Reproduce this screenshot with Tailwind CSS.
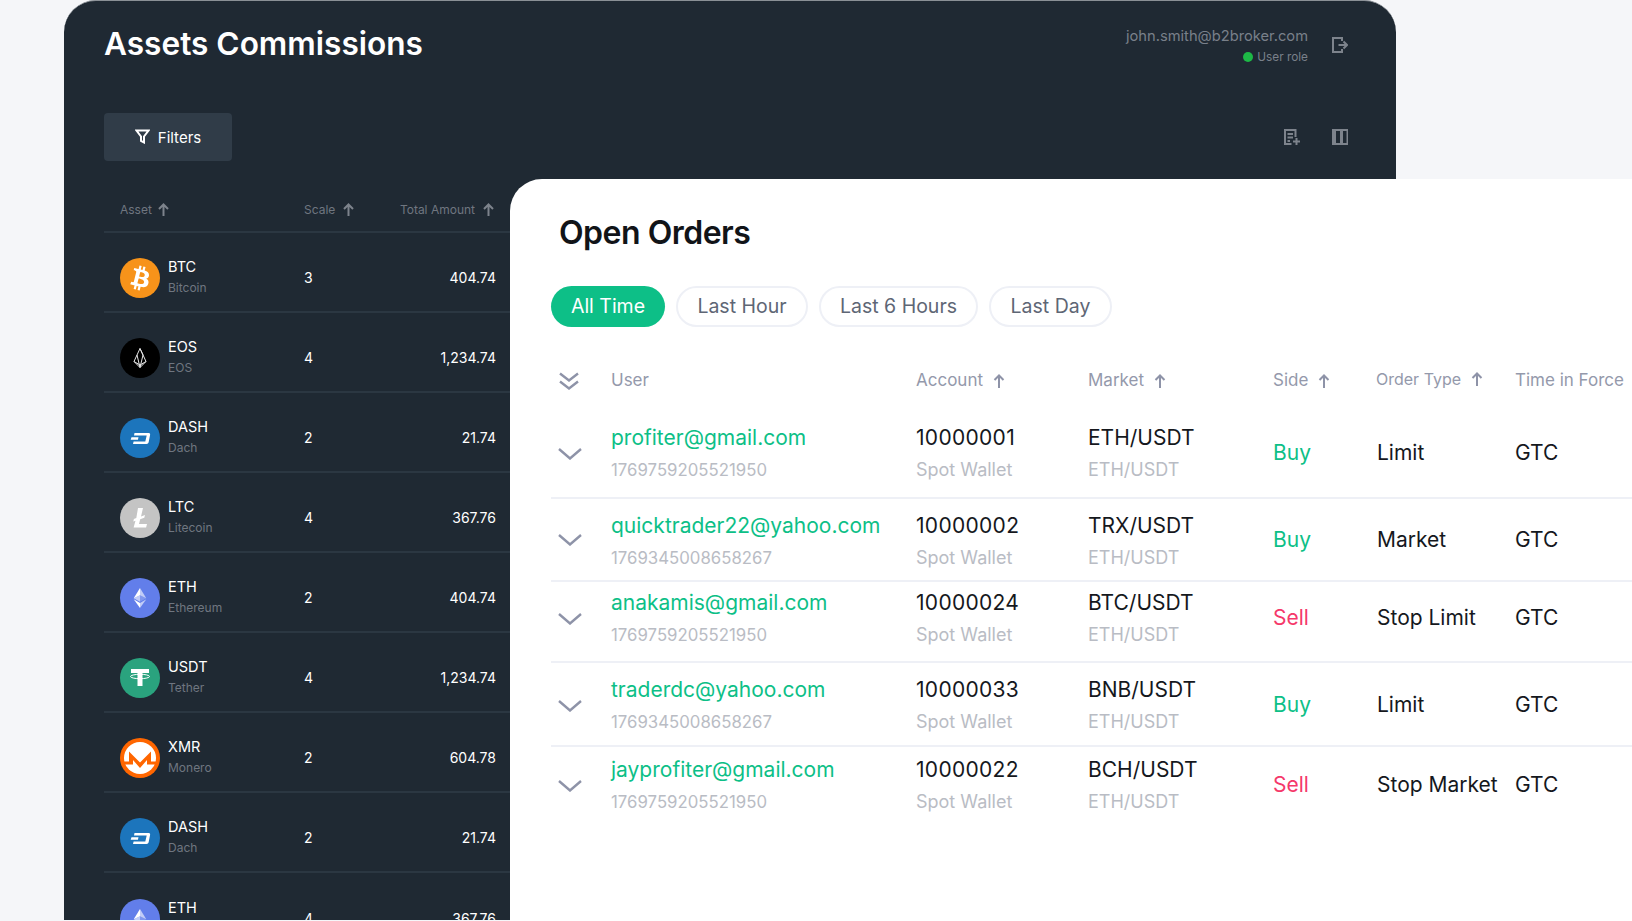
<!DOCTYPE html>
<html><head><meta charset="utf-8"><title>Orders</title>
<script src="https://cdn.jsdelivr.net/npm/@tailwindcss/browser@4"></script></head>
<body class="m-0 font-['Inter','Liberation_Sans',sans-serif]">
<div class="relative w-[1632px] h-[921px] overflow-hidden bg-[#f5f6f9]">
  <!-- dark window -->
  <section class="absolute left-[64px] top-0 w-[1332px] h-[920px] rounded-t-[32px] border-t border-[#8a9096] bg-[#1f2933] pl-[40px] pr-[48px] text-white overflow-hidden">
    <header class="flex items-start justify-between h-[112px]">
      <h1 class="mt-[24px] text-[31.600px] leading-[38px] font-semibold">Assets Commissions</h1>
      <div class="flex items-start pt-[26px]">
        <div class="text-right text-[#79808a]">
          <div class="text-[14.700px] leading-[18px]">john.smith@b2broker.com</div>
          <div class="mt-[4px] flex items-center justify-end gap-[4px] text-[11.800px] leading-[16px]"><span class="size-[10px] rounded-full bg-[#1db846]"></span>User role</div>
        </div>
        <svg class="ml-[24px] mt-[10px]" width="16" height="16" viewBox="0 0 16 16" fill="none" stroke="#7d838c" stroke-width="2"><path d="M10 4V1H1v14h9v-3M6.500 8H15M11.500 4.500 15 8l-3.500 3.500"/></svg>
      </div>
    </header>
    <div class="flex items-center justify-between h-[47px]">
      <button class="flex items-center justify-center gap-[8px] w-[128px] h-[48px] rounded-[4px] bg-[#303c48] text-[15px] text-white">
        <svg width="15" height="15" viewBox="0 0 15 15" fill="none" stroke="#fff" stroke-width="2"><path d="M1.500 1.500h12L9 7.500v6l-3-1.500V7.500z"/></svg><span class="mt-[3px]">Filters</span>
      </button>
      <div class="flex items-center gap-[32px]">
        <svg width="16" height="16" viewBox="0 0 16 16" fill="none" stroke="#7d838c" stroke-width="2"><path d="M11.500 8V1H1v14h6.500M3.500 5h5.500M3.500 8.500h5.500M3.500 12h2.500M12.500 9v7M9 12.500h7"/></svg>
        <svg width="16" height="16" viewBox="0 0 16 16"><path fill="#7d838c" fill-rule="evenodd" d="M0 0h16v16H0zM4 2v12h4V2zM11 2v12h3.500V2z"/></svg>
      </div>
    </div>
    <div class="w-[406px] mt-[24px]">
      <div class="grid grid-cols-[184px_86px_1fr] items-center h-[49px] pt-[4px] pl-[16px] pr-[16px] border-b-2 border-[#2b3742] text-[12px] text-[#6f7680]">
        <div class="flex items-center gap-[6px]">Asset <svg width="11" height="13" viewBox="0 0 11 13" fill="none" stroke="#7d838c" stroke-width="2"><path d="M5.500 13V1.500M1 6l4.500-4.500L10 6"/></svg></div>
        <div class="flex items-center gap-[8px]">Scale <svg width="11" height="13" viewBox="0 0 11 13" fill="none" stroke="#7d838c" stroke-width="2"><path d="M5.500 13V1.500M1 6l4.500-4.500L10 6"/></svg></div>
        <div class="flex items-center justify-end gap-[8px] whitespace-nowrap">Total Amount <svg width="11" height="13" viewBox="0 0 11 13" fill="none" stroke="#7d838c" stroke-width="2"><path d="M5.500 13V1.500M1 6l4.500-4.500L10 6"/></svg></div>
      </div>

      <div class="grid grid-cols-[184px_86px_1fr] items-center h-[80px] pt-[11px] pl-[16px] pr-[14px] border-b-2 border-[#2b3742] text-[14.500px]">
        <div class="flex items-center gap-[8px]">
          <svg class="size-[40px]" viewBox="0 0 32 32"><circle cx="16" cy="16" r="16" fill="#f7931a"/><path fill="#fff" d="M23.189 14.020c.314-2.096-1.283-3.223-3.465-3.975l.708-2.840-1.728-.430-.690 2.765c-.454-.114-.920-.220-1.385-.326l.695-2.783L15.596 6l-.708 2.839c-.376-.086-.746-.170-1.104-.260l.002-.009-2.384-.595-.460 1.846s1.283.294 1.256.312c.700.175.826.638.805 1.006l-.806 3.235c.048.012.110.030.180.057l-.183-.045-1.130 4.532c-.086.212-.303.531-.793.410.018.025-1.256-.313-1.256-.313l-.858 1.978 2.250.561c.418.105.828.215 1.231.318l-.715 2.872 1.727.430.708-2.840c.472.127.930.245 1.378.357l-.706 2.828 1.728.430.715-2.866c2.948.558 5.164.333 6.097-2.333.752-2.146-.037-3.385-1.588-4.192 1.130-.260 1.980-1.003 2.207-2.538zm-3.950 5.538c-.533 2.147-4.148.986-5.320.695l.950-3.805c1.172.293 4.929.872 4.370 3.110zm.535-5.569c-.487 1.953-3.495.960-4.470.717l.860-3.450c.975.243 4.118.696 3.610 2.733z"/></svg>
          <div><div class="leading-[20px]">BTC</div><div class="mt-[1px] text-[12px] leading-[20px] text-[#6f7680]">Bitcoin</div></div>
        </div><div class="text-[14px]">3</div><div class="text-right text-[14px]">404.74</div>
      </div>

      <div class="grid grid-cols-[184px_86px_1fr] items-center h-[80px] pt-[11px] pl-[16px] pr-[14px] border-b-2 border-[#2b3742] text-[14.500px]">
        <div class="flex items-center gap-[8px]">
          <svg class="size-[40px]" viewBox="0 0 40 40"><circle cx="20" cy="20" r="20" fill="#000"/><path fill="none" stroke="#e8e8e8" stroke-width="1" d="M20 10.500 17 17l-3 6.500 6 6 6-6-3-6.500zM17 17l3 12.500L23 17 20 10.500M14 23.500l6 3.500 6-3.500"/></svg>
          <div><div class="leading-[20px]">EOS</div><div class="mt-[1px] text-[12px] leading-[20px] text-[#6f7680]">EOS</div></div>
        </div><div class="text-[14px]">4</div><div class="text-right text-[14px]">1,234.74</div>
      </div>

      <div class="grid grid-cols-[184px_86px_1fr] items-center h-[80px] pt-[11px] pl-[16px] pr-[14px] border-b-2 border-[#2b3742] text-[14.500px]">
        <div class="flex items-center gap-[8px]">
          <svg class="size-[40px]" viewBox="0 0 40 40"><circle cx="20" cy="20" r="20" fill="#1c75bc"/><path fill="#fff" d="M14.500 15h14.300c1 0 1.500.8 1.300 1.800l-1.400 7.200c-.2 1-1 2-2.200 2H13l.6-2.600h11.700l1.400-5.800H14zM11.500 19.300h7l-.6 2.400h-7.200z"/></svg>
          <div><div class="leading-[20px]">DASH</div><div class="mt-[1px] text-[12px] leading-[20px] text-[#6f7680]">Dach</div></div>
        </div><div class="text-[14px]">2</div><div class="text-right text-[14px]">21.74</div>
      </div>

      <div class="grid grid-cols-[184px_86px_1fr] items-center h-[80px] pt-[11px] pl-[16px] pr-[14px] border-b-2 border-[#2b3742] text-[14.500px]">
        <div class="flex items-center gap-[8px]">
          <svg class="size-[40px]" viewBox="0 0 40 40"><circle cx="20" cy="20" r="20" fill="#c4c4c4"/><path fill="#fff" d="M18 10h5l-2 8.500 4-1.500-.7 2.800-4.100 1.500-1.200 4.700H27l-.9 3.500H13.600l1.900-6.800-2.200.9.600-2.600 2.400-1z"/></svg>
          <div><div class="leading-[20px]">LTC</div><div class="mt-[1px] text-[12px] leading-[20px] text-[#6f7680]">Litecoin</div></div>
        </div><div class="text-[14px]">4</div><div class="text-right text-[14px]">367.76</div>
      </div>

      <div class="grid grid-cols-[184px_86px_1fr] items-center h-[80px] pt-[11px] pl-[16px] pr-[14px] border-b-2 border-[#2b3742] text-[14.500px]">
        <div class="flex items-center gap-[8px]">
          <svg class="size-[40px]" viewBox="0 0 40 40"><circle cx="20" cy="20" r="20" fill="#627eea"/><g fill="#fff" transform="translate(20 20) scale(.84) translate(-16.500 -16)"><path fill-opacity=".602" d="M16.498 4v8.870l7.497 3.350z"/><path d="M16.498 4L9 16.220l7.498-3.350z"/><path fill-opacity=".602" d="M16.498 21.968v6.027L24 17.616z"/><path d="M16.498 27.995v-6.028L9 17.616z"/><path fill-opacity=".2" d="M16.498 20.573l7.497-4.353-7.497-3.348z"/><path fill-opacity=".602" d="M9 16.220l7.498 4.353v-7.701z"/></g></svg>
          <div><div class="leading-[20px]">ETH</div><div class="mt-[1px] text-[12px] leading-[20px] text-[#6f7680]">Ethereum</div></div>
        </div><div class="text-[14px]">2</div><div class="text-right text-[14px]">404.74</div>
      </div>

      <div class="grid grid-cols-[184px_86px_1fr] items-center h-[80px] pt-[11px] pl-[16px] pr-[14px] border-b-2 border-[#2b3742] text-[14.500px]">
        <div class="flex items-center gap-[8px]">
          <svg class="size-[40px]" viewBox="0 0 40 40"><circle cx="20" cy="20" r="20" fill="#2aa37e"/><path fill="#fff" d="M11 11h18v4h-6.500v13h-5V15H11z"/><ellipse cx="20" cy="18.500" rx="9.500" ry="2.200" fill="none" stroke="#fff" stroke-width="1"/></svg>
          <div><div class="leading-[20px]">USDT</div><div class="mt-[1px] text-[12px] leading-[20px] text-[#6f7680]">Tether</div></div>
        </div><div class="text-[14px]">4</div><div class="text-right text-[14px]">1,234.74</div>
      </div>

      <div class="grid grid-cols-[184px_86px_1fr] items-center h-[80px] pt-[11px] pl-[16px] pr-[14px] border-b-2 border-[#2b3742] text-[14.500px]">
        <div class="flex items-center gap-[8px]">
          <svg class="size-[40px]" viewBox="0 0 40 40"><circle cx="20" cy="20" r="20" fill="#ff6600"/><circle cx="20" cy="20" r="16" fill="#fff"/><path fill="#ff6600" d="M3 23.500h6v-10l11 11 11-11v10h6l-1 3H27V22l-7 8-7-8v4.500H4z"/></svg>
          <div><div class="leading-[20px]">XMR</div><div class="mt-[1px] text-[12px] leading-[20px] text-[#6f7680]">Monero</div></div>
        </div><div class="text-[14px]">2</div><div class="text-right text-[14px]">604.78</div>
      </div>

      <div class="grid grid-cols-[184px_86px_1fr] items-center h-[80px] pt-[11px] pl-[16px] pr-[14px] border-b-2 border-[#2b3742] text-[14.500px]">
        <div class="flex items-center gap-[8px]">
          <svg class="size-[40px]" viewBox="0 0 40 40"><circle cx="20" cy="20" r="20" fill="#1c75bc"/><path fill="#fff" d="M14.500 15h14.300c1 0 1.500.8 1.300 1.800l-1.400 7.200c-.2 1-1 2-2.200 2H13l.6-2.600h11.700l1.400-5.800H14zM11.500 19.300h7l-.6 2.400h-7.200z"/></svg>
          <div><div class="leading-[20px]">DASH</div><div class="mt-[1px] text-[12px] leading-[20px] text-[#6f7680]">Dach</div></div>
        </div><div class="text-[14px]">2</div><div class="text-right text-[14px]">21.74</div>
      </div>

      <div class="grid grid-cols-[184px_86px_1fr] items-center h-[80px] pt-[11px] pl-[16px] pr-[14px] text-[14.500px]">
        <div class="flex items-center gap-[8px]">
          <svg class="size-[40px]" viewBox="0 0 40 40"><circle cx="20" cy="20" r="20" fill="#627eea"/><g fill="#fff" transform="translate(20 20) scale(.84) translate(-16.500 -16)"><path fill-opacity=".602" d="M16.498 4v8.870l7.497 3.350z"/><path d="M16.498 4L9 16.220l7.498-3.350z"/><path fill-opacity=".602" d="M16.498 21.968v6.027L24 17.616z"/><path d="M16.498 27.995v-6.028L9 17.616z"/><path fill-opacity=".2" d="M16.498 20.573l7.497-4.353-7.497-3.348z"/><path fill-opacity=".602" d="M9 16.220l7.498 4.353v-7.701z"/></g></svg>
          <div><div class="leading-[20px]">ETH</div><div class="mt-[1px] text-[12px] leading-[20px] text-[#6f7680]">Ethereum</div></div>
        </div><div class="text-[14px]">4</div><div class="text-right text-[14px]">367.76</div>
      </div>
    </div>
  </section>

  <!-- white window -->
  <section class="absolute left-[510px] top-[179px] w-[1122px] h-[742px] rounded-tl-[32px] bg-white pl-[41px]">
    <h2 class="ml-[8px] pt-[34px] text-[32px] leading-[40px] font-semibold tracking-[-0.5px] text-[#111418]">Open Orders</h2>
    <div class="mt-[33px] flex gap-[11px] text-[19.500px] text-[#5e6675]">
      <span class="flex items-center justify-center w-[114px] h-[41px] rounded-full bg-[#0dbf87] text-white">All Time</span>
      <span class="flex items-center justify-center w-[132px] h-[41px] rounded-full border-2 border-[#eef0f6]">Last Hour</span>
      <span class="flex items-center justify-center w-[159px] h-[41px] rounded-full border-2 border-[#eef0f6]">Last 6 Hours</span>
      <span class="flex items-center justify-center w-[123px] h-[41px] rounded-full border-2 border-[#eef0f6]">Last Day</span>
    </div>
    <div class="mt-[35px] grid grid-cols-[60px_305px_172px_185px_104px_138px_1fr] items-center h-[38px] text-[17px] text-[#9499ab] whitespace-nowrap">
      <svg class="ml-[8px]" width="20" height="19" viewBox="0 0 20 19" fill="none" stroke="#8e93a8" stroke-width="2.400"><path d="M1 1.500 10 8.500 19 1.500M1 9.500l9 7 9-7"/></svg>
      <div>User</div>
      <div class="flex items-center gap-[10px]">Account <svg width="12" height="14" viewBox="0 0 12 14" fill="none" stroke="#8e93a8" stroke-width="2"><path d="M6 14V1.500M1.500 6 6 1.500 10.500 6"/></svg></div>
      <div class="flex items-center gap-[10px]">Market <svg width="12" height="14" viewBox="0 0 12 14" fill="none" stroke="#8e93a8" stroke-width="2"><path d="M6 14V1.500M1.500 6 6 1.500 10.500 6"/></svg></div>
      <div class="flex items-center gap-[10px]">Side <svg width="12" height="14" viewBox="0 0 12 14" fill="none" stroke="#8e93a8" stroke-width="2"><path d="M6 14V1.500M1.500 6 6 1.500 10.500 6"/></svg></div>
      <div class="flex items-center gap-[10px] -mt-[4px] -ml-[1px] text-[16px]">Order Type <svg width="12" height="14" viewBox="0 0 12 14" fill="none" stroke="#8e93a8" stroke-width="2"><path d="M6 14V1.500M1.500 6 6 1.500 10.500 6"/></svg></div>
      <div>Time in Force</div>
    </div>

    <div class="mt-[15px] grid grid-cols-[60px_305px_172px_185px_104px_138px_1fr] items-center h-[84px] pt-[11px] pb-[15px] border-b-2 border-[#eef0f6] text-[21px] text-[#15181d] whitespace-nowrap">
      <svg class="ml-[7px]" width="24" height="12" viewBox="0 0 24 12" fill="none" stroke="#8e93a8" stroke-width="2.400"><path d="M1 1 12 10.500 23 1"/></svg>
      <div><div class="leading-[24px] text-[#0dbf87]">profiter@gmail.com</div><div class="mt-[8px] text-[16.800px] leading-[24px] text-[#b9bcc4]">1769759205521950</div></div>
      <div><div class="leading-[24px] tracking-[0.3px]">10000001</div><div class="mt-[8px] text-[18px] leading-[24px] text-[#b9bcc4]">Spot Wallet</div></div>
      <div><div class="leading-[24px]">ETH/USDT</div><div class="mt-[8px] text-[18px] leading-[24px] text-[#b9bcc4]">ETH/USDT</div></div>
      <div class="mb-[3px] text-[#0dbf87]">Buy</div><div class="mb-[3px]">Limit</div><div class="mb-[3px]">GTC</div>
    </div>
    <div class="grid grid-cols-[60px_305px_172px_185px_104px_138px_1fr] items-center h-[83px] pt-[15px] pb-[10px] border-b-2 border-[#eef0f6] text-[21px] text-[#15181d] whitespace-nowrap">
      <svg class="ml-[7px] mb-[4px]" width="24" height="12" viewBox="0 0 24 12" fill="none" stroke="#8e93a8" stroke-width="2.400"><path d="M1 1 12 10.500 23 1"/></svg>
      <div><div class="leading-[24px] text-[#0dbf87]">quicktrader22@yahoo.com</div><div class="mt-[8px] text-[16.800px] leading-[24px] text-[#b9bcc4]">1769345008658267</div></div>
      <div><div class="leading-[24px] tracking-[0.3px]">10000002</div><div class="mt-[8px] text-[18px] leading-[24px] text-[#b9bcc4]">Spot Wallet</div></div>
      <div><div class="leading-[24px]">TRX/USDT</div><div class="mt-[8px] text-[18px] leading-[24px] text-[#b9bcc4]">ETH/USDT</div></div>
      <div class="mb-[4px] text-[#0dbf87]">Buy</div><div class="mb-[4px]">Market</div><div class="mb-[4px]">GTC</div>
    </div>
    <div class="grid grid-cols-[60px_305px_172px_185px_104px_138px_1fr] items-center h-[81px] pt-[9px] pb-[14px] border-b-2 border-[#eef0f6] text-[21px] text-[#15181d] whitespace-nowrap">
      <svg class="ml-[7px]" width="24" height="12" viewBox="0 0 24 12" fill="none" stroke="#8e93a8" stroke-width="2.400"><path d="M1 1 12 10.500 23 1"/></svg>
      <div><div class="leading-[24px] text-[#0dbf87]">anakamis@gmail.com</div><div class="mt-[8px] text-[16.800px] leading-[24px] text-[#b9bcc4]">1769759205521950</div></div>
      <div><div class="leading-[24px] tracking-[0.3px]">10000024</div><div class="mt-[8px] text-[18px] leading-[24px] text-[#b9bcc4]">Spot Wallet</div></div>
      <div><div class="leading-[24px]">BTC/USDT</div><div class="mt-[8px] text-[18px] leading-[24px] text-[#b9bcc4]">ETH/USDT</div></div>
      <div class="mb-[3px] text-[#f5386a]">Sell</div><div class="mb-[3px]">Stop Limit</div><div class="mb-[3px]">GTC</div>
    </div>
    <div class="grid grid-cols-[60px_305px_172px_185px_104px_138px_1fr] items-center h-[84px] pt-[15px] pb-[11px] border-b-2 border-[#eef0f6] text-[21px] text-[#15181d] whitespace-nowrap">
      <svg class="ml-[7px]" width="24" height="12" viewBox="0 0 24 12" fill="none" stroke="#8e93a8" stroke-width="2.400"><path d="M1 1 12 10.500 23 1"/></svg>
      <div><div class="leading-[24px] text-[#0dbf87]">traderdc@yahoo.com</div><div class="mt-[8px] text-[16.800px] leading-[24px] text-[#b9bcc4]">1769345008658267</div></div>
      <div><div class="leading-[24px] tracking-[0.3px]">10000033</div><div class="mt-[8px] text-[18px] leading-[24px] text-[#b9bcc4]">Spot Wallet</div></div>
      <div><div class="leading-[24px]">BNB/USDT</div><div class="mt-[8px] text-[18px] leading-[24px] text-[#b9bcc4]">ETH/USDT</div></div>
      <div class="mb-[3px] text-[#0dbf87]">Buy</div><div class="mb-[3px]">Limit</div><div class="mb-[3px]">GTC</div>
    </div>
    <div class="grid grid-cols-[60px_305px_172px_185px_104px_138px_1fr] items-center h-[84px] pt-[10px] pb-[16px] text-[21px] text-[#15181d] whitespace-nowrap">
      <svg class="ml-[7px]" width="24" height="12" viewBox="0 0 24 12" fill="none" stroke="#8e93a8" stroke-width="2.400"><path d="M1 1 12 10.500 23 1"/></svg>
      <div><div class="leading-[24px] text-[#0dbf87]">jayprofiter@gmail.com</div><div class="mt-[8px] text-[16.800px] leading-[24px] text-[#b9bcc4]">1769759205521950</div></div>
      <div><div class="leading-[24px] tracking-[0.3px]">10000022</div><div class="mt-[8px] text-[18px] leading-[24px] text-[#b9bcc4]">Spot Wallet</div></div>
      <div><div class="leading-[24px]">BCH/USDT</div><div class="mt-[8px] text-[18px] leading-[24px] text-[#b9bcc4]">ETH/USDT</div></div>
      <div class="mb-[3px] text-[#f5386a]">Sell</div><div class="mb-[3px]">Stop Market</div><div class="mb-[3px]">GTC</div>
    </div>
  </section>
</div>
</body></html>
